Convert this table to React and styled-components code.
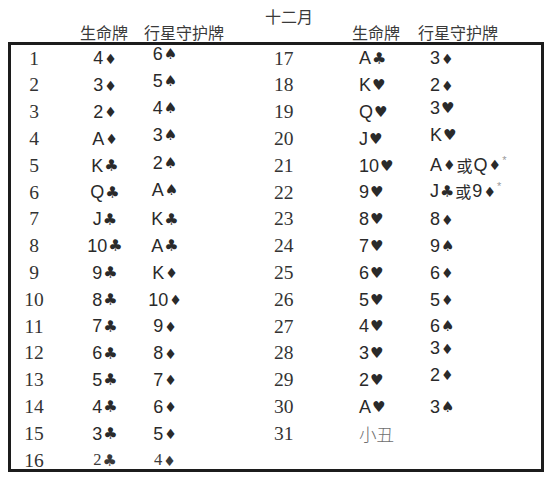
import React from "react";
import styled, { createGlobalStyle, css } from "styled-components";

const Global = createGlobalStyle`
  html, body { margin: 0; padding: 0; background: #fff; }
  body { font-family: "Liberation Sans", "Noto Sans CJK SC", sans-serif; color: #2b2b2b; }
`;

const Page = styled.div`
  width: 551px;
  height: 482px;
  background: #fff;
  overflow: hidden;
`;

const Header = styled.div`
  height: 41.5px;
  box-sizing: border-box;
  display: flex;
  align-items: flex-end;
  padding-left: 80px;
  padding-bottom: 2px;
  font-family: "Noto Sans CJK SC", sans-serif;
  font-size: 16px;
  line-height: 16px;
  color: #3a3a3a;
`;

const Label = styled.span`
  display: block;
  width: ${(p) => p.$w}px;
  margin-right: ${(p) => p.$gap || 0}px;
  white-space: nowrap;
`;

const Month = styled(Label)`
  align-self: flex-start;
  margin-top: 8px;
`;

const Frame = styled.div`
  margin-left: 7.5px;
  width: 536px;
  height: 430px;
  box-sizing: border-box;
  border: 3px solid #1c1c1c;
`;

const Rows = styled.div`
  display: grid;
  grid-template-rows: repeat(16, 26.8px);
  padding-top: 0.5px;
`;

const Row = styled.div`
  display: grid;
  grid-template-columns: 53px 89px 31px 93.5px 85px 71px 1fr;
  align-items: center;
  margin-left: -3px;
`;

const Num = styled.div`
  font-family: "Liberation Serif", serif;
  font-size: 19.5px;
  line-height: 1;
  color: #333;
  text-align: ${(p) => (p.$right ? "left" : "center")};
  ${(p) => p.$right && css`grid-column: 5;`}
`;

const Card = styled.div`
  font-size: 18px;
  line-height: 1;
  white-space: nowrap;
  color: #2a2a2a;
  display: flex;
  align-items: center;
  justify-content: ${(p) => (p.$center ? "center" : "flex-start")};
  position: relative;
  top: ${(p) => (p.$up ? -p.$up : 0)}px;
  ${(p) =>
    p.$small &&
    css`
      font-family: "Liberation Serif", serif;
      font-size: 16.5px;
      color: #3a3a3a;
    `}
`;

const SUIT_SIZE = { "♦": 14, "♣": 16, "♥": 15, "♠": 15 };

const Suit = styled.span`
  font-family: "DejaVu Sans", sans-serif;
  font-size: ${(p) => SUIT_SIZE[p.$s]}px;
  line-height: 1;
  margin-left: 1px;
  position: relative;
  top: 0.5px;
`;

const Or = styled.span`
  font-family: "Noto Sans CJK SC", sans-serif;
  font-size: 16px;
  margin: 0 1px;
`;

const Star = styled.span`
  font-size: 11px;
  color: #9a9a9a;
  align-self: flex-start;
  margin-left: 1px;
  margin-top: -1px;
`;

const Joker = styled.div`
  font-family: "Noto Sans CJK SC", sans-serif;
  font-size: 17.5px;
  font-weight: 300;
  color: #6e6e6e;
  line-height: 1;
`;

const SUITS = "♠♥♦♣";

function renderCard(str) {
  return Array.from(str).map((ch, i) => {
    if (SUITS.includes(ch)) return <Suit key={i} $s={ch}>{ch}</Suit>;
    if (ch === "*") return <Star key={i}>*</Star>;
    if (ch === "或") return <Or key={i}>或</Or>;
    return <span key={i}>{ch}</span>;
  });
}

const left = [
  ["4♦", "6♠", 4], ["3♦", "5♠", 4], ["2♦", "4♠", 4], ["A♦", "3♠", 4],
  ["K♣", "2♠", 3], ["Q♣", "A♠", 2], ["J♣", "K♣", 0], ["10♣", "A♣", 0],
  ["9♣", "K♦", 0], ["8♣", "10♦", 0], ["7♣", "9♦", 0], ["6♣", "8♦", 0],
  ["5♣", "7♦", 0], ["4♣", "6♦", 0], ["3♣", "5♦", 0], ["2♣", "4♦", 0],
];

const right = [
  ["A♣", "3♦", 0], ["K♥", "2♦", 0], ["Q♥", "3♥", 4], ["J♥", "K♥", 4],
  ["10♥", "A♦或Q♦*", 1], ["9♥", "J♣或9♦*", 1], ["8♥", "8♦", 0], ["7♥", "9♠", 0],
  ["6♥", "6♦", 0], ["5♥", "5♦", 0], ["4♥", "6♠", 0], ["3♥", "3♦", 5],
  ["2♥", "2♦", 5], ["A♥", "3♠", 0], [null, "", 0],
];

export default function App() {
  return (
    <Page>
      <Global />
      <Header>
        <Label $w={48} $gap={16}>生命牌</Label>
        <Label $w={80} $gap={41}>行星守护牌</Label>
        <Month $w={47} $gap={40}>十二月</Month>
        <Label $w={48} $gap={18}>生命牌</Label>
        <Label $w={82}>行星守护牌</Label>
      </Header>
      <Frame>
        <Rows>
          {left.map(([life, planet, up], i) => {
            const r = right[i];
            const small = i === 15;
            return (
              <Row key={i}>
                <Num>{i + 1}</Num>
                <Card $center $small={small}>{renderCard(life)}</Card>
                <Card $center $up={up} $small={small}>{renderCard(planet)}</Card>
                {r && <Num $right>{i + 17}</Num>}
                {r && (r[0] === null ? <Joker>小丑</Joker> : <Card>{renderCard(r[0])}</Card>)}
                {r && <Card $up={r[2]}>{renderCard(r[1])}</Card>}
              </Row>
            );
          })}
        </Rows>
      </Frame>
    </Page>
  );
}
